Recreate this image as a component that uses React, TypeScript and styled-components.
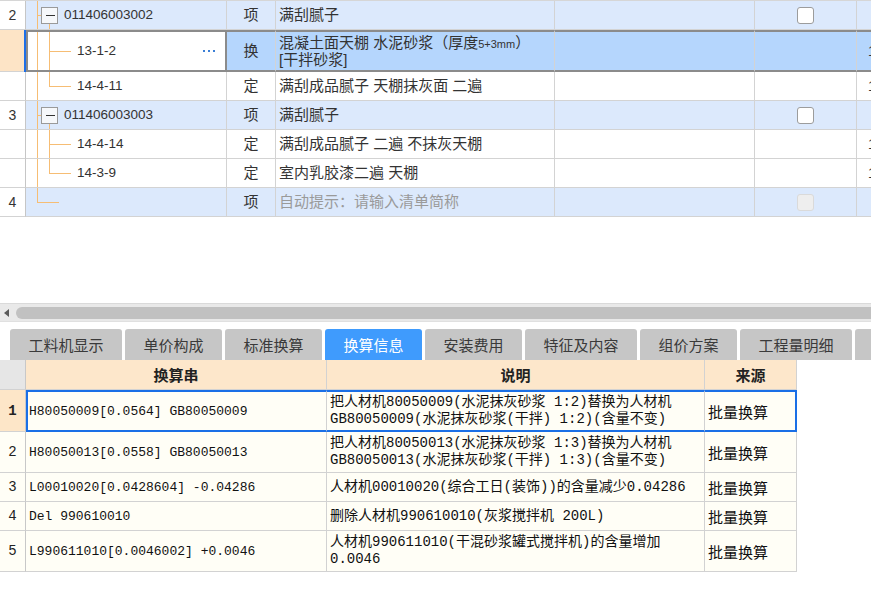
import React from "react";
import styled, { createGlobalStyle, css } from "styled-components";

type RowKind = "item" | "sub" | "selected";
type Branch = "parent" | "child" | "last" | "end";

interface TopRow {
  kind: RowKind;
  num?: string;
  branch: Branch;
  code?: string;
  type: string;
  name: React.ReactNode;
  hint?: boolean;
  check?: "on" | "off";
  tail?: string;
  h: number;
}

interface ConvRow {
  n: string;
  code: string;
  desc: string[];
  h: number;
  selected?: boolean;
}

const GlobalStyle = createGlobalStyle`
  html, body {
    margin: 0;
    padding: 0;
    background: #fff;
  }
  body {
    font-family: "Liberation Sans", "Noto Sans CJK SC", sans-serif;
    color: #333;
  }
  * {
    box-sizing: border-box;
  }
`;

const Page = styled.div`
  width: 871px;
  height: 594px;
  overflow: hidden;
  display: flex;
  flex-direction: column;
  background: #fff;
`;

const TopPane = styled.div`
  height: 303px;
  flex: none;
  overflow: hidden;
  border-top: 1px solid #d6d6d6;
`;

const GridRow = styled.div<{ $h: number }>`
  display: grid;
  grid-template-columns: 26px 201px 49px 279px 200px 102px 1fr;
  height: ${(p) => p.$h}px;
`;

const rowBg = {
  item: "#dce9fc",
  sub: "#ffffff",
  selected: "#b5d6fd",
};

const Cell = styled.div<{ $kind: RowKind }>`
  display: flex;
  align-items: center;
  min-width: 0;
  overflow: hidden;
  white-space: nowrap;
  background: ${(p) => rowBg[p.$kind]};
  border-right: 1px solid #d3d3d3;
  border-bottom: 1px solid #d3d3d3;
  font-size: 15px;
  line-height: 16px;
  ${(p) =>
    p.$kind === "selected" &&
    css`
      border-top: 2px solid #8b8b8b;
      border-bottom: 2px solid #8b8b8b;
    `}
`;

const NumCell = styled(Cell)`
  justify-content: center;
  font-size: 14px;
  background: ${(p) => (p.$kind === "selected" ? "#fde4c6" : "#fff")};
  border-right: 1px solid #c6c6c6;
  ${(p) =>
    p.$kind === "selected" &&
    css`
      border-top: none;
      border-bottom: 1px solid #d3d3d3;
    `}
`;

const CodeCell = styled(Cell)`
  font-size: 13.5px;
  overflow: visible;
  ${(p) =>
    p.$kind === "selected" &&
    css`
      background: #fff;
      border-left: 2px solid #8b8b8b;
      border-right: 2px solid #8b8b8b;
      box-shadow: -2px 0 0 #1d6fe8;
    `}
`;

const Guide = styled.svg`
  flex: none;
  display: block;
  align-self: center;
  shape-rendering: crispEdges;

  line {
    stroke: #f6bd74;
    stroke-width: 1;
  }
  .box {
    fill: #f6f8fb;
    stroke: #9a9a9a;
  }
  .minus {
    stroke: #333;
    stroke-width: 1.4;
  }
`;

const Dots = styled.svg`
  flex: none;
  margin-left: auto;
  margin-right: 8px;
  fill: #3b7fd6;
`;

const TypeCell = styled(Cell)`
  justify-content: center;
`;

const NameCell = styled(Cell)<{ $hint?: boolean }>`
  padding-left: 3px;
  color: ${(p) => (p.$hint ? "#9a9a9a" : "#333")};
`;

const Small = styled.span`
  font-size: 11px;
`;

const CheckCell = styled(Cell)`
  justify-content: center;
`;

const Check = styled.span<{ $off?: boolean }>`
  width: 17px;
  height: 17px;
  border-radius: 3px;
  border: 1px solid ${(p) => (p.$off ? "#dadada" : "#9c9c9c")};
  background: ${(p) => (p.$off ? "#eeeeee" : "#fff")};
`;

const TailCell = styled(Cell)`
  border-right: none;
  padding-left: 11px;
  font-size: 14px;
`;

const HScroll = styled.div`
  height: 19px;
  flex: none;
  display: flex;
  align-items: center;
  padding-left: 4px;
  background: #e9e9e9;
  border-top: 1px solid #dadada;
  border-bottom: 1px solid #e0e0e0;
  overflow: hidden;
`;

const ScrollThumb = styled.div`
  flex: 1;
  height: 12px;
  margin-left: 7px;
  margin-right: -10px;
  border-radius: 6px;
  background: #c1c1c1;
`;

const TabStrip = styled.div`
  height: 38px;
  flex: none;
  display: flex;
  gap: 3px;
  padding: 7px 0 0 10px;
  overflow: hidden;
`;

const Tab = styled.div<{ $active?: boolean }>`
  flex: none;
  height: 31px;
  padding: 0 18.5px;
  border-radius: 3px 3px 0 0;
  font-family: "Noto Sans CJK SC", sans-serif;
  font-size: 15px;
  line-height: 31px;
  white-space: nowrap;
  background: ${(p) => (p.$active ? "#3f9bfd" : "#c6c6c6")};
  color: ${(p) => (p.$active ? "#fff" : "#3a3a3a")};
`;

const ConvTable = styled.div`
  width: 797px;
  flex: none;
`;

const ConvRowBox = styled.div<{ $h: number }>`
  display: grid;
  grid-template-columns: 26px 301px 378px 92px;
  height: ${(p) => p.$h}px;
`;

const Corner = styled.div`
  background: #e6e6e6;
  border-right: 1px solid #c8c8c8;
  border-bottom: 1px solid #d2d2d2;
`;

const HeadCell = styled.div`
  display: flex;
  align-items: center;
  justify-content: center;
  background: #fde7cb;
  border-right: 1px solid #d2d2d2;
  border-bottom: 1px solid #d2d2d2;
  font-family: "Noto Sans CJK SC", sans-serif;
  font-size: 15px;
  font-weight: bold;
  color: #222;
`;

const ConvCell = styled.div<{ $sel?: boolean; $first?: boolean; $last?: boolean }>`
  display: flex;
  align-items: center;
  min-width: 0;
  overflow: hidden;
  white-space: nowrap;
  padding-left: 3px;
  background: #fffef6;
  border-right: 1px solid #d2d2d2;
  border-bottom: 1px solid #d2d2d2;
  color: #111;
  ${(p) =>
    p.$sel &&
    css`
      border-top: 2px solid #1a6fe6;
      border-bottom: 2px solid #1a6fe6;
    `}
  ${(p) =>
    p.$sel &&
    p.$first &&
    css`
      border-left: 2px solid #1a6fe6;
      padding-left: 1px;
    `}
  ${(p) =>
    p.$sel &&
    p.$last &&
    css`
      border-right: 2px solid #1a6fe6;
    `}
`;

const ConvNum = styled.div<{ $sel?: boolean }>`
  display: flex;
  align-items: center;
  justify-content: center;
  background: ${(p) => (p.$sel ? "#fde6c8" : "#fffef6")};
  border-right: 1px solid #c8c8c8;
  border-bottom: 1px solid #d2d2d2;
  font-family: "Liberation Mono", monospace;
  font-size: 14px;
  font-weight: ${(p) => (p.$sel ? "bold" : "normal")};
  color: #222;
`;

const ConvCode = styled(ConvCell)`
  font-family: "Liberation Mono", monospace;
  font-size: 13px;
`;

const ConvDesc = styled(ConvCell)`
  font-family: "Liberation Mono", "Noto Sans CJK SC", monospace;
  font-size: 14px;
  line-height: 17px;
`;

const ConvSource = styled(ConvCell)`
  font-family: "Noto Sans CJK SC", sans-serif;
  font-size: 15px;
`;

const topRows: TopRow[] = [
  { kind: "item", num: "2", branch: "parent", code: "011406003002", type: "项", name: "满刮腻子", check: "on", h: 29 },
  {
    kind: "selected",
    branch: "child",
    code: "13-1-2",
    type: "换",
    name: (
      <>
        混凝土面天棚 水泥砂浆（厚度<Small>5+3mm</Small>）
        <br />
        [干拌砂浆]
      </>
    ),
    tail: "1",
    h: 42,
  },
  { kind: "sub", branch: "last", code: "14-4-11", type: "定", name: "满刮成品腻子 天棚抹灰面 二遍", tail: "1", h: 29 },
  { kind: "item", num: "3", branch: "parent", code: "011406003003", type: "项", name: "满刮腻子", check: "on", h: 29 },
  { kind: "sub", branch: "child", code: "14-4-14", type: "定", name: "满刮成品腻子 二遍 不抹灰天棚", tail: "1", h: 29 },
  { kind: "sub", branch: "last", code: "14-3-9", type: "定", name: "室内乳胶漆二遍 天棚", tail: "1", h: 29 },
  { kind: "item", num: "4", branch: "end", type: "项", name: "自动提示：请输入清单简称", hint: true, check: "off", h: 29 },
];

const tabs = ["工料机显示", "单价构成", "标准换算", "换算信息", "安装费用", "特征及内容", "组价方案", "工程量明细", "说明信息"];

const convRows: ConvRow[] = [
  {
    n: "1",
    code: "H80050009[0.0564] GB80050009",
    desc: ["把人材机80050009(水泥抹灰砂浆 1:2)替换为人材机", "GB80050009(水泥抹灰砂浆(干拌) 1:2)(含量不变)"],
    h: 42,
    selected: true,
  },
  {
    n: "2",
    code: "H80050013[0.0558] GB80050013",
    desc: ["把人材机80050013(水泥抹灰砂浆 1:3)替换为人材机", "GB80050013(水泥抹灰砂浆(干拌) 1:3)(含量不变)"],
    h: 41,
  },
  { n: "3", code: "L00010020[0.0428604] -0.04286", desc: ["人材机00010020(综合工日(装饰))的含量减少0.04286"], h: 29 },
  { n: "4", code: "Del 990610010", desc: ["删除人材机990610010(灰浆搅拌机 200L)"], h: 29 },
  { n: "5", code: "L990611010[0.0046002] +0.0046", desc: ["人材机990611010(干混砂浆罐式搅拌机)的含量增加", "0.0046"], h: 41 },
];

function TreeGuide({ branch, h, shift = 0 }: { branch: Branch; h: number; shift?: number }) {
  const m = Math.floor(h / 2) + 0.5;
  const a = 11.5 - shift; // trunk
  const b = 23.5 - shift; // item stem
  const w = (branch === "parent" ? 38 : 51) - shift;

  return (
    <Guide width={w} height={h}>
      <line x1={a} y1={0} x2={a} y2={branch === "end" ? m : h} />
      {branch === "end" && <line x1={a} y1={m} x2={a + 21} y2={m} />}
      {branch === "parent" && (
        <>
          <line x1={a} y1={m} x2={b - 8} y2={m} />
          <line x1={b} y1={m + 8} x2={b} y2={h} />
          <rect className="box" x={b - 8} y={m - 8} width={16} height={16} rx={1} />
          <line className="minus" x1={b - 4} y1={m} x2={b + 5} y2={m} />
        </>
      )}
      {(branch === "child" || branch === "last") && (
        <>
          <line x1={b} y1={0} x2={b} y2={branch === "last" ? m : h} />
          <line x1={b} y1={m} x2={b + 21} y2={m} />
        </>
      )}
    </Guide>
  );
}

function App() {
  return (
    <>
      <GlobalStyle />
      <Page>
        <TopPane>
          {topRows.map((r, i) => {
            const inner = r.kind === "selected" ? r.h - 4 : r.h - 1;
            return (
              <GridRow key={i} $h={r.h}>
                <NumCell $kind={r.kind}>{r.num}</NumCell>
                <CodeCell $kind={r.kind}>
                  <TreeGuide branch={r.branch} h={inner} shift={r.kind === "selected" ? 2 : 0} />
                  {r.code}
                  {r.kind === "selected" && (
                    <Dots width={14} height={3}>
                      <rect x={0} y={0} width={2} height={2} />
                      <rect x={5} y={0} width={2} height={2} />
                      <rect x={10} y={0} width={2} height={2} />
                    </Dots>
                  )}
                </CodeCell>
                <TypeCell $kind={r.kind}>{r.type}</TypeCell>
                <NameCell $kind={r.kind} $hint={r.hint}>
                  <span>{r.name}</span>
                </NameCell>
                <Cell $kind={r.kind} />
                <CheckCell $kind={r.kind}>{r.check && <Check $off={r.check === "off"} />}</CheckCell>
                <TailCell $kind={r.kind}>{r.tail}</TailCell>
              </GridRow>
            );
          })}
        </TopPane>

        <HScroll>
          <svg width={5} height={8}>
            <polygon points="5,0 0,4 5,8" fill="#5a5a5a" />
          </svg>
          <ScrollThumb />
        </HScroll>

        <TabStrip>
          {tabs.map((t) => (
            <Tab key={t} $active={t === "换算信息"}>
              {t}
            </Tab>
          ))}
        </TabStrip>

        <ConvTable>
          <ConvRowBox $h={30}>
            <Corner />
            <HeadCell>换算串</HeadCell>
            <HeadCell>说明</HeadCell>
            <HeadCell>来源</HeadCell>
          </ConvRowBox>
          {convRows.map((r) => (
            <ConvRowBox key={r.n} $h={r.h}>
              <ConvNum $sel={r.selected}>{r.n}</ConvNum>
              <ConvCode $sel={r.selected} $first>
                {r.code}
              </ConvCode>
              <ConvDesc $sel={r.selected}>
                <div>
                  {r.desc.map((d, j) => (
                    <div key={j}>{d}</div>
                  ))}
                </div>
              </ConvDesc>
              <ConvSource $sel={r.selected} $last>
                批量换算
              </ConvSource>
            </ConvRowBox>
          ))}
        </ConvTable>
      </Page>
    </>
  );
}

export default App;
